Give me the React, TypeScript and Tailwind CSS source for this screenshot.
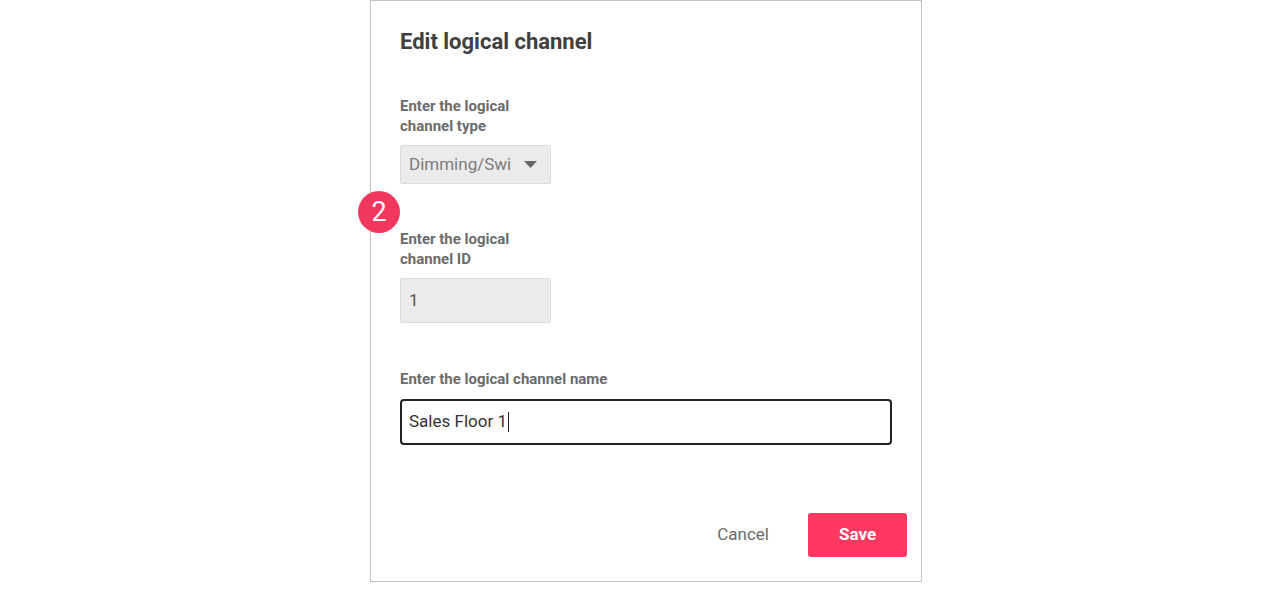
export default function App() {
  return (
    <div className="min-h-screen bg-white font-['Roboto',sans-serif]">
      <div className="relative ml-[370px] w-[552px] h-[582px] border border-[#c4c4c4] bg-white px-[29px] pt-[27px]">
        <div className="absolute left-[-13px] top-[190px] w-[42px] h-[42px] rounded-full bg-[#f2375f] flex items-center justify-center text-white text-[27px] leading-none">
          2
        </div>
        <h2 className="h-[28px] text-[22px] leading-[28px] font-bold text-[#404040]">
          Edit logical channel
        </h2>

        <div className="mt-[40px] w-[150px] text-[15px] leading-[20px] font-bold text-[#6b6b6b]">
          Enter the logical channel type
        </div>
        <div className="mt-[9px] w-[151px] h-[39px] bg-[#ebebeb] border border-[#dcdcdc] rounded-[2px] flex items-center pl-[8px] pr-[13px]">
          <span className="whitespace-nowrap text-[17px] text-[#7a7a7a]">
            Dimming/Swi
          </span>
          <svg className="ml-auto w-[13px] h-[7px]" viewBox="0 0 13 7">
            <path d="M0 0h13L6.5 7z" fill="#666" />
          </svg>
        </div>

        <div className="mt-[45px] w-[150px] text-[15px] leading-[20px] font-bold text-[#6b6b6b]">
          Enter the logical channel ID
        </div>
        <div className="mt-[9px] w-[151px] h-[45px] bg-[#ebebeb] border border-[#dcdcdc] rounded-[2px] flex items-center pl-[8px] text-[17px] text-[#555]">
          1
        </div>

        <div className="mt-[46px] text-[15px] leading-[20px] font-bold text-[#6b6b6b]">
          Enter the logical channel name
        </div>
        <div className="mt-[10px] w-[492px] h-[46px] border-2 border-[#222] rounded-[4px] flex items-center pl-[7px] text-[17px] text-[#333]">
          Sales Floor 1<span className="ml-[1px] inline-block w-[1px] h-[20px] bg-[#222]"></span>
        </div>

        <div className="mt-[68px] flex items-center justify-end gap-[39px] mr-[-15px]">
          <button className="text-[17px] text-[#6b6b6b]">Cancel</button>
          <button className="w-[99px] h-[44px] rounded-[3px] bg-[#ff3862] text-white text-[17px] font-bold">
            Save
          </button>
        </div>
      </div>
    </div>
  );
}
